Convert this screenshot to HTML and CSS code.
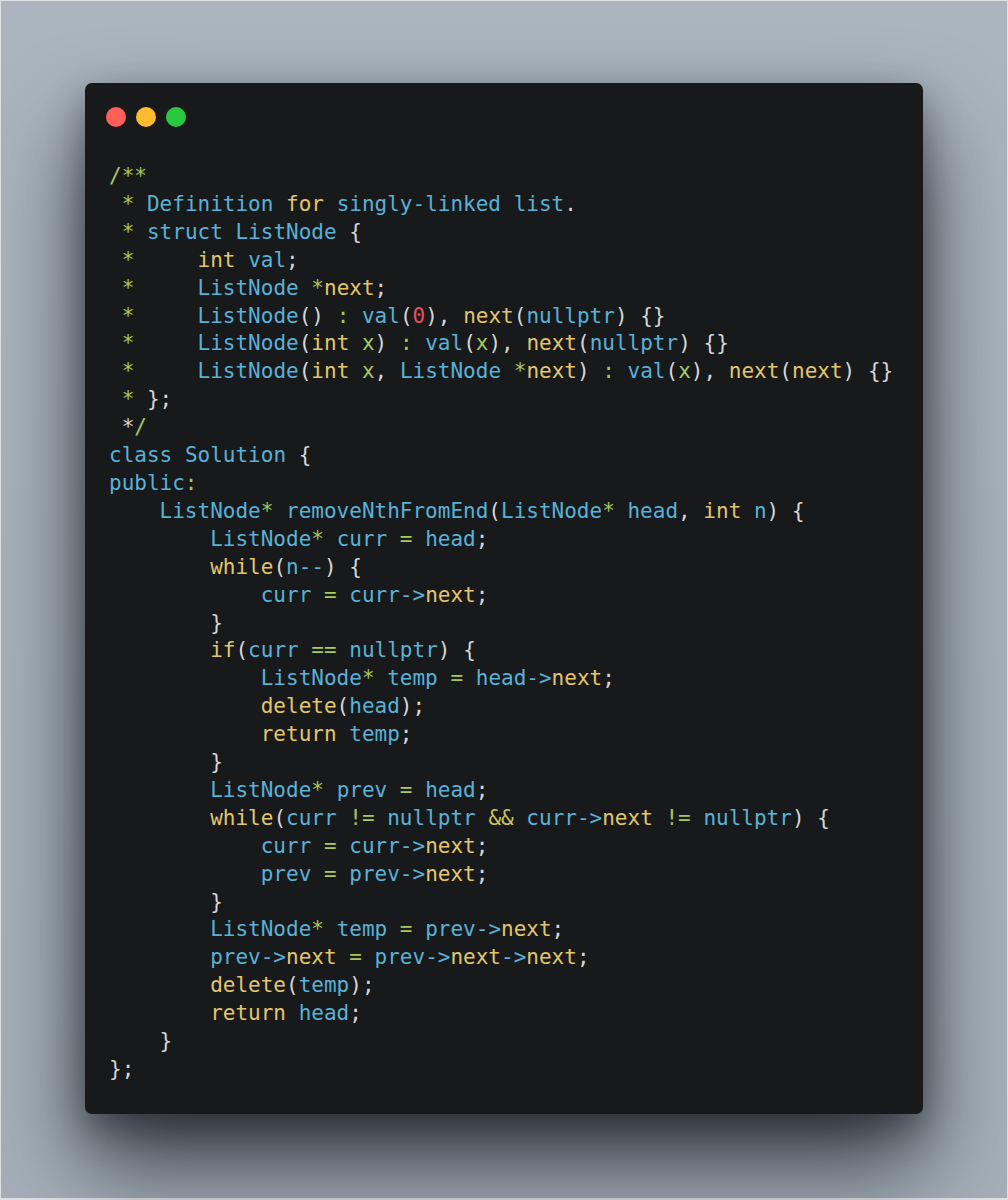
FILE: index.html
```html
<!DOCTYPE html>
<html lang="en">
<head>
<meta charset="utf-8">
<title>removeNthFromEnd</title>
<link rel="stylesheet" href="styles.css">
</head>
<body>
<div class="frame">
  <div class="card">
    <div class="dots">
      <span class="dot red"></span>
      <span class="dot yellow"></span>
      <span class="dot green"></span>
    </div>
<pre class="code"><span class="g">/**</span>
 <span class="g">*</span> <span class="b">Definition</span> <span class="y">for</span> <span class="b">singly-linked list</span><span class="p">.</span>
 <span class="g">*</span> <span class="b">struct</span> <span class="b">ListNode</span> <span class="p">{</span>
 <span class="g">*</span>     <span class="y">int</span> <span class="b">val</span><span class="p">;</span>
 <span class="g">*</span>     <span class="b">ListNode</span> <span class="g">*</span><span class="y">next</span><span class="p">;</span>
 <span class="g">*</span>     <span class="b">ListNode</span><span class="p">()</span> <span class="g">:</span> <span class="b">val</span><span class="p">(</span><span class="r">0</span><span class="p">),</span> <span class="y">next</span><span class="p">(</span><span class="b">nullptr</span><span class="p">)</span> <span class="p">{}</span>
 <span class="g">*</span>     <span class="b">ListNode</span><span class="p">(</span><span class="y">int</span> <span class="g">x</span><span class="p">)</span> <span class="g">:</span> <span class="b">val</span><span class="p">(</span><span class="g">x</span><span class="p">),</span> <span class="y">next</span><span class="p">(</span><span class="b">nullptr</span><span class="p">)</span> <span class="p">{}</span>
 <span class="g">*</span>     <span class="b">ListNode</span><span class="p">(</span><span class="y">int</span> <span class="g">x</span><span class="p">,</span> <span class="b">ListNode</span> <span class="g">*</span><span class="y">next</span><span class="p">)</span> <span class="g">:</span> <span class="b">val</span><span class="p">(</span><span class="g">x</span><span class="p">),</span> <span class="y">next</span><span class="p">(</span><span class="y">next</span><span class="p">)</span> <span class="p">{}</span>
 <span class="g">*</span> <span class="p">};</span>
 <span class="p">*</span><span class="g">/</span>
<span class="b">class</span> <span class="b">Solution</span> <span class="p">{</span>
<span class="b">public</span><span class="g">:</span>
    <span class="b">ListNode</span><span class="g">*</span> <span class="b">removeNthFromEnd</span><span class="p">(</span><span class="b">ListNode</span><span class="g">*</span> <span class="b">head</span><span class="p">,</span> <span class="y">int</span> <span class="b">n</span><span class="p">)</span> <span class="p">{</span>
        <span class="b">ListNode</span><span class="g">*</span> <span class="b">curr</span> <span class="g">=</span> <span class="b">head</span><span class="p">;</span>
        <span class="y">while</span><span class="p">(</span><span class="b">n--</span><span class="p">)</span> <span class="p">{</span>
            <span class="b">curr</span> <span class="g">=</span> <span class="b">curr-&gt;</span><span class="y">next</span><span class="p">;</span>
        <span class="p">}</span>
        <span class="y">if</span><span class="p">(</span><span class="b">curr</span> <span class="g">==</span> <span class="b">nullptr</span><span class="p">)</span> <span class="p">{</span>
            <span class="b">ListNode</span><span class="g">*</span> <span class="b">temp</span> <span class="g">=</span> <span class="b">head-&gt;</span><span class="y">next</span><span class="p">;</span>
            <span class="y">delete</span><span class="p">(</span><span class="b">head</span><span class="p">);</span>
            <span class="y">return</span> <span class="b">temp</span><span class="p">;</span>
        <span class="p">}</span>
        <span class="b">ListNode</span><span class="g">*</span> <span class="b">prev</span> <span class="g">=</span> <span class="b">head</span><span class="p">;</span>
        <span class="y">while</span><span class="p">(</span><span class="b">curr</span> <span class="g">!=</span> <span class="b">nullptr</span> <span class="a">&amp;&amp;</span> <span class="b">curr-&gt;</span><span class="y">next</span> <span class="g">!=</span> <span class="b">nullptr</span><span class="p">)</span> <span class="p">{</span>
            <span class="b">curr</span> <span class="g">=</span> <span class="b">curr-&gt;</span><span class="y">next</span><span class="p">;</span>
            <span class="b">prev</span> <span class="g">=</span> <span class="b">prev-&gt;</span><span class="y">next</span><span class="p">;</span>
        <span class="p">}</span>
        <span class="b">ListNode</span><span class="g">*</span> <span class="b">temp</span> <span class="g">=</span> <span class="b">prev-&gt;</span><span class="y">next</span><span class="p">;</span>
        <span class="b">prev-&gt;</span><span class="y">next</span> <span class="g">=</span> <span class="b">prev-&gt;</span><span class="y">next</span><span class="b">-&gt;</span><span class="y">next</span><span class="p">;</span>
        <span class="y">delete</span><span class="p">(</span><span class="b">temp</span><span class="p">);</span>
        <span class="y">return</span> <span class="b">head</span><span class="p">;</span>
    <span class="p">}</span>
<span class="p">};</span></pre>
  </div>
</div>
</body>
</html>
```
FILE: styles.css
```css
html, body {
  margin: 0;
  padding: 0;
}
body {
  width: 1008px;
  height: 1200px;
  background: #dfe3e7;
}
.frame {
  box-sizing: border-box;
  width: 1008px;
  height: 1200px;
  border: 1px solid #dde2e6;
  border-width: 1px 1px 2px 1px;
  background: linear-gradient(180deg, #aab5bf 0%, #a4afb9 100%);
  padding: 82px 84px 0 84px;
  display: flex;
  flex-direction: column;
}
.card {
  box-sizing: border-box;
  width: 838px;
  height: 1031px;
  background: #18191b;
  border-radius: 7px;
  box-shadow: 0 50px 90px rgba(10, 14, 20, 0.7), 0 14px 36px rgba(0, 0, 0, 0.35);
  padding: 24px 24px 0 21px;
}
.dots {
  display: flex;
  gap: 10px;
  height: 20px;
}
.dot {
  width: 20px;
  height: 20px;
  border-radius: 50%;
  display: block;
}
.dot.red { background: #fe5f57; }
.dot.yellow { background: #fdbb2e; }
.dot.green { background: #29c840; }
.code {
  margin: 36px 0 0 3px;
  font-family: "DejaVu Sans Mono", "Liberation Mono", monospace;
  font-size: 21px;
  line-height: 27.9px;
  color: #d4d4d4;
  white-space: pre;
}
.b { color: #58b2d8; }
.y { color: #e3c66b; }
.g { color: #a7c95c; }
.r { color: #e4515d; }
.p { color: #d6d6d6; }
.a { color: #c9c860; }
```
